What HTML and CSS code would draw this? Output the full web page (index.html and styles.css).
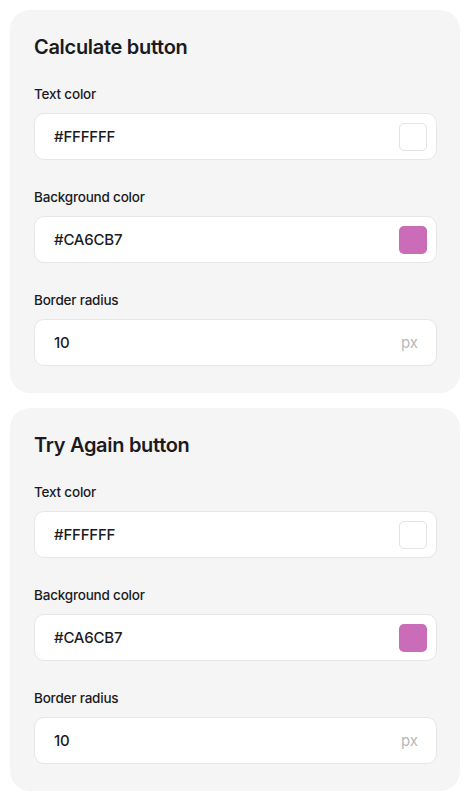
FILE: index.html
```html
<!DOCTYPE html>
<html lang="en">
<head>
<meta charset="utf-8">
<title>Button settings</title>
<link rel="stylesheet" href="styles.css">
</head>
<body>
<div class="page">
  <section class="card">
    <h2 class="card-title">Calculate button</h2>
    <div class="field">
      <label class="field-label">Text color</label>
      <div class="input">
        <span class="input-value">#FFFFFF</span>
        <span class="swatch swatch-white"></span>
      </div>
    </div>
    <div class="field">
      <label class="field-label">Background color</label>
      <div class="input">
        <span class="input-value">#CA6CB7</span>
        <span class="swatch swatch-pink"></span>
      </div>
    </div>
    <div class="field">
      <label class="field-label">Border radius</label>
      <div class="input input-unit">
        <span class="input-value">10</span>
        <span class="unit">px</span>
      </div>
    </div>
  </section>
  <section class="card">
    <h2 class="card-title">Try Again button</h2>
    <div class="field">
      <label class="field-label">Text color</label>
      <div class="input">
        <span class="input-value">#FFFFFF</span>
        <span class="swatch swatch-white"></span>
      </div>
    </div>
    <div class="field">
      <label class="field-label">Background color</label>
      <div class="input">
        <span class="input-value">#CA6CB7</span>
        <span class="swatch swatch-pink"></span>
      </div>
    </div>
    <div class="field">
      <label class="field-label">Border radius</label>
      <div class="input input-unit">
        <span class="input-value">10</span>
        <span class="unit">px</span>
      </div>
    </div>
  </section>
</div>
</body>
</html>
```
FILE: styles.css
```css
* { box-sizing: border-box; }
html, body { margin: 0; padding: 0; background: #ffffff; }
body {
  font-family: Inter, "Noto Sans", "Liberation Sans", sans-serif;
  color: #1b1b1f;
}
.page {
  padding: 10px 8px 10px 10px;
  display: flex;
  flex-direction: column;
  gap: 15px;
}
.card {
  background: #f5f5f5;
  border-radius: 20px;
  padding: 23px 23px 27px 24px;
  display: flex;
  flex-direction: column;
  gap: 27px;
}
.card-title {
  margin: 0 0 -4px 0;
  font-size: 20px;
  line-height: 28px;
  font-weight: 600;
  letter-spacing: -0.3px;
}
.field {
  display: flex;
  flex-direction: column;
  gap: 9px;
}
.field-label {
  font-size: 13.5px;
  line-height: 20px;
  font-weight: 500;
  letter-spacing: -0.2px;
}
.input {
  height: 47px;
  background: #ffffff;
  border: 1px solid #e6e6e6;
  border-radius: 10px;
  display: flex;
  align-items: center;
  justify-content: space-between;
  padding: 0 9px 0 19px;
}
.input-unit { padding-right: 18px; }
.input-value {
  font-size: 15px;
  font-weight: 500;
  letter-spacing: -0.2px;
}
.unit {
  font-size: 15px;
  color: #b8b8b8;
}
.swatch {
  width: 28px;
  height: 28px;
  border-radius: 5px;
}
.swatch-white {
  background: #ffffff;
  border: 1px solid #e3e3e3;
}
.swatch-pink {
  background: #ca6cb7;
}
```
